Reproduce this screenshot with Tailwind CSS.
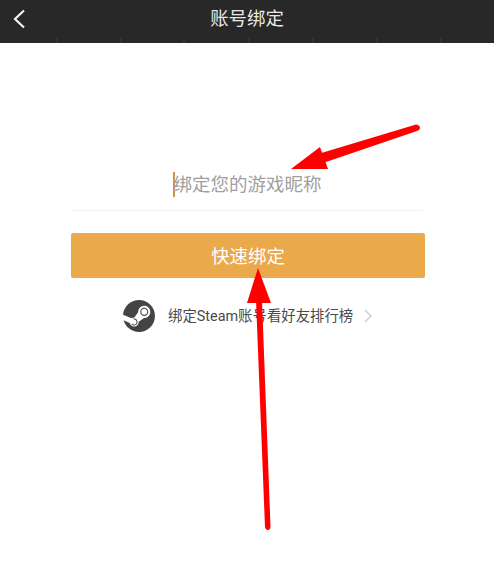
<!DOCTYPE html>
<html lang="zh">
<head>
<meta charset="utf-8">
<script src="https://cdn.jsdelivr.net/npm/@tailwindcss/browser@4"></script>
</head>
<body class="bg-white font-['Roboto','Noto_Sans_CJK_SC','Noto_Sans',sans-serif]">
<div class="relative w-[494px] h-[575px] overflow-hidden bg-white">
  <header class="relative h-[43px] bg-[#282828] flex items-center justify-center">
    <svg class="absolute left-[12px] top-[7px]" width="16" height="24" viewBox="0 0 16 24" fill="none"><path d="M12 3.5 L3 12 L12 20.5" stroke="#f2f2f2" stroke-width="2.2"/></svg>
    <h1 class="text-[18.4px] leading-[36px] -mt-[6px] text-[#e8e8e8] font-normal">账号绑定</h1>
    <svg class="absolute left-0 bottom-0" width="494" height="6" viewBox="0 0 494 6"><path d="M57 1V6M121 1V6M184 1V6M249 1V6M313 1V6M377 1V6M441 1V6" stroke="#3c3c3c" stroke-width="1"/></svg>
  </header>
  <main class="px-[71px] pt-[127px]">
    <div class="h-[38px] flex items-start justify-center border-b border-[#f3f3f3] box-content ml-[1px] pt-[4px] -mt-[2px]">
      <div class="w-[150px] flex items-center h-[25px]">
        <span class="w-[2px] h-[25px] bg-[#c8963e] shrink-0"></span>
        <span class="mt-[1px] text-[18.5px] leading-[26px] text-[#a0a0a0] whitespace-nowrap -ml-[1px]">绑定您的游戏昵称</span>
      </div>
    </div>
    <button class="mt-[22px] w-[354px] h-[45px] pt-[2px] bg-[#eaa94b] rounded-[2px] text-white text-[18.4px] flex items-center justify-center">快速绑定</button>
    <div class="mt-[22px] flex items-center pl-[52px]">
      <svg width="32" height="32" viewBox="0 0 24 24" class="shrink-0" fill="#444444">
        <path d="M11.979 0C5.678 0 .511 4.86.022 11.037l6.432 2.658c.545-.371 1.203-.59 1.912-.59.063 0 .125.004.188.006l2.861-4.142V8.91c0-2.495 2.028-4.524 4.524-4.524 2.494 0 4.524 2.031 4.524 4.527s-2.03 4.525-4.524 4.525h-.105l-4.076 2.911c0 .052.004.105.004.159 0 1.875-1.515 3.396-3.39 3.396-1.635 0-3.016-1.173-3.331-2.727L.436 15.27C1.862 20.307 6.486 24 11.979 24c6.627 0 11.999-5.373 11.999-12S18.605 0 11.979 0zM7.54 18.21l-1.473-.61c.262.543.714.999 1.314 1.25 1.297.539 2.793-.076 3.332-1.375.263-.63.264-1.319.005-1.949s-.75-1.121-1.377-1.383c-.624-.26-1.29-.249-1.878-.03l1.523.63c.956.4 1.409 1.5 1.009 2.455-.397.957-1.497 1.41-2.454 1.012H7.54zm11.415-9.303c0-1.662-1.353-3.015-3.015-3.015-1.665 0-3.015 1.353-3.015 3.015 0 1.665 1.35 3.015 3.015 3.015 1.663 0 3.015-1.35 3.015-3.015zm-5.273-.005c0-1.252 1.013-2.266 2.265-2.266 1.249 0 2.266 1.014 2.266 2.266 0 1.251-1.017 2.265-2.266 2.265-1.253 0-2.265-1.014-2.265-2.265z"/>
      </svg>
      <span class="ml-[13px] pt-[2px] text-[14.4px] leading-[20px] text-[#4a4a4a] whitespace-nowrap">绑定Steam账号看好友排行榜</span>
      <svg class="ml-[10px]" width="10" height="16" viewBox="0 0 10 16" fill="none"><path d="M2 2 L8 8 L2 14" stroke="#c8c8c8" stroke-width="1.2"/></svg>
    </div>
  </main>
  <svg class="absolute inset-0" width="494" height="575" viewBox="0 0 494 575" fill="none">
    <path d="M416 124.5 Q420 125 420 128 Q420 130 417 131 L320 164 L318 154 Z" fill="#ff0000"/>
    <path d="M291 169 L320 147 L328 169 Z" fill="#ff0000"/>
    <path d="M256 300 L262 300 L270.5 527 Q270 530 268 530 Q265.5 530 265 527 Z" fill="#ff0000"/>
    <path d="M258 268 L247 303 L271 303 Z" fill="#ff0000"/>
  </svg>
</div>
</body>
</html>
